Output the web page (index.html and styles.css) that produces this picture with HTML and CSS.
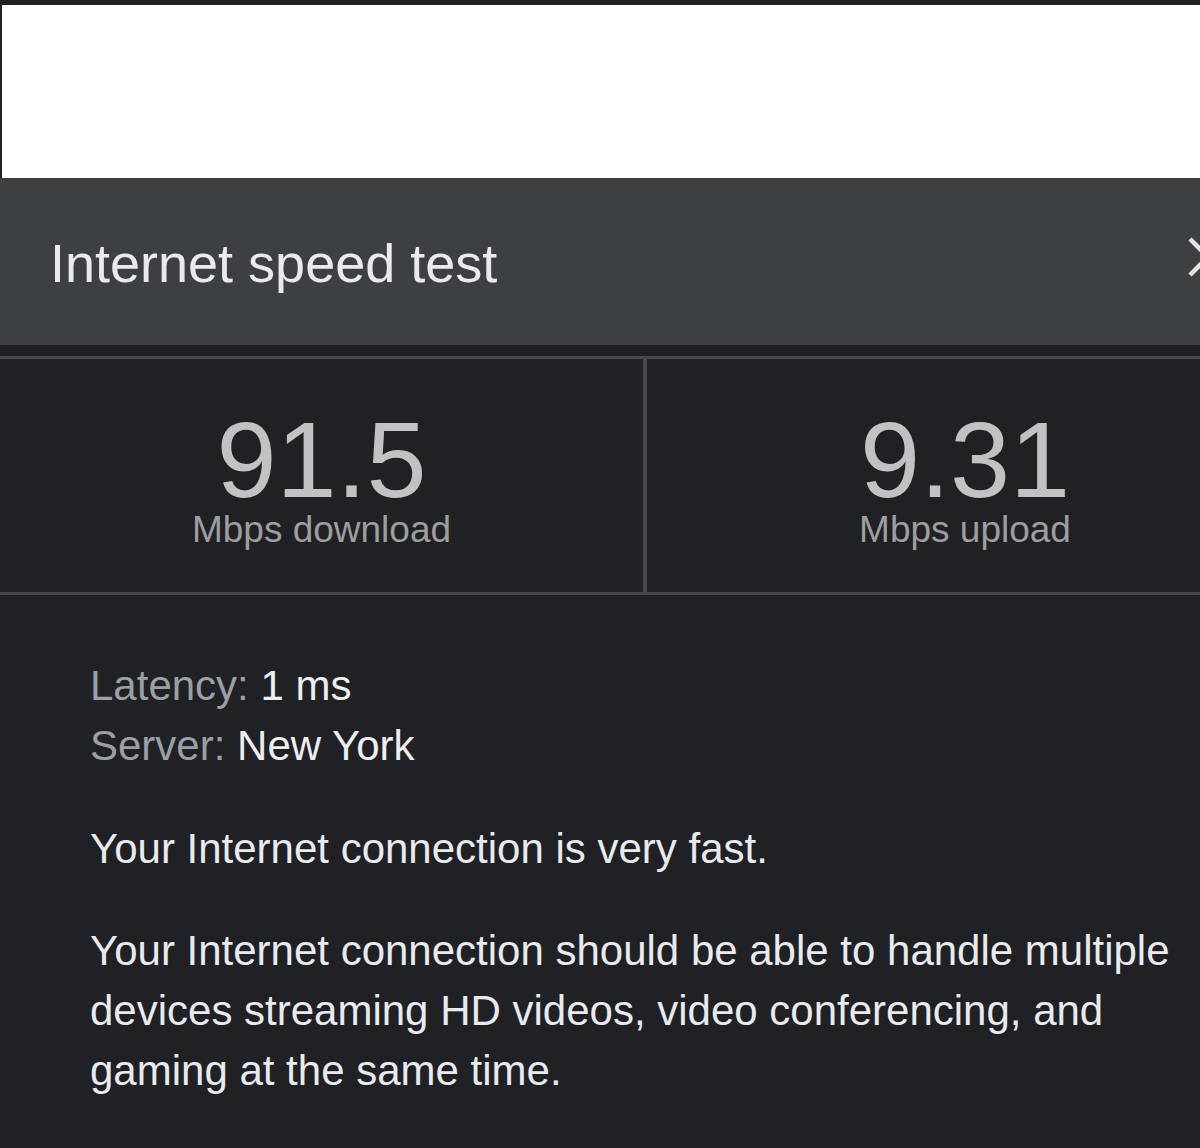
FILE: index.html
```html
<!DOCTYPE html>
<html lang="en">
<head>
<meta charset="utf-8">
<title>Internet speed test</title>
<link rel="stylesheet" href="styles.css">
</head>
<body>
<div class="page">
  <div class="top-blank"></div>
  <header class="header">
    <h1 class="title">Internet speed test</h1>
    <svg class="close" width="12" height="40" viewBox="0 0 12 40" aria-label="Close">
      <path d="M2 2 L38 38 M38 2 L2 38" stroke="#e3e3e3" stroke-width="4.5" fill="none"/>
    </svg>
  </header>
  <div class="gap"></div>
  <section class="stats">
    <div class="cell">
      <div class="num">91.5</div>
      <div class="unit">Mbps download</div>
    </div>
    <div class="divider"></div>
    <div class="cell cell-right">
      <div class="num">9.31</div>
      <div class="unit">Mbps upload</div>
    </div>
  </section>
  <section class="details">
    <div class="meta">
      <div class="row"><span class="key">Latency:</span> <span class="val">1 ms</span></div>
      <div class="row"><span class="key">Server:</span> <span class="val">New York</span></div>
    </div>
    <p class="para">Your Internet connection is very fast.</p>
    <p class="para">Your Internet connection should be able to handle multiple devices streaming HD videos, video conferencing, and gaming at the same time.</p>
  </section>
</div>
</body>
</html>
```
FILE: styles.css
```css
html, body {
  margin: 0;
  padding: 0;
}
body {
  background: #202124;
  width: 1200px;
  height: 1148px;
  overflow: hidden;
  font-family: "Liberation Sans", Arial, sans-serif;
}
.page {
  width: 1200px;
}
.top-blank {
  margin: 5px 0 0 2px;
  height: 173px;
  background: #ffffff;
}
.header {
  height: 167px;
  background: #3c4043;
  display: flex;
  align-items: center;
  padding: 0 0 0 50px;
  box-sizing: border-box;
}
.title {
  margin: 0;
  padding-top: 3px;
  font-weight: normal;
  font-size: 54px;
  line-height: 62px;
  color: #e8eaed;
  flex: 1;
}
.close {
  display: block;
  flex: none;
  margin-top: -10px;
}
.gap {
  height: 11px;
}
.stats {
  display: grid;
  grid-template-columns: 643px 4px 1fr;
  border-top: 3px solid #47494c;
  border-bottom: 3px solid #47494c;
}
.divider {
  background: #47494c;
}
.cell {
  height: 233px;
  box-sizing: border-box;
  padding-top: 51px;
  text-align: center;
}
.cell-right {
  padding-left: 83px;
}
.num {
  font-size: 108px;
  line-height: 100px;
  color: #c2c2c2;
}
.unit {
  font-size: 37px;
  line-height: 40px;
  color: #9e9e9e;
}
.details {
  padding: 61px 0 0 90px;
  width: 1110px;
  font-size: 42px;
  line-height: 60px;
  color: #e8eaed;
}
.key {
  color: #9aa0a6;
}
.val {
  color: #eeeeee;
}
.para {
  margin: 43px 0 0 0;
}
.para + .para {
  margin-top: 42px;
}
```
